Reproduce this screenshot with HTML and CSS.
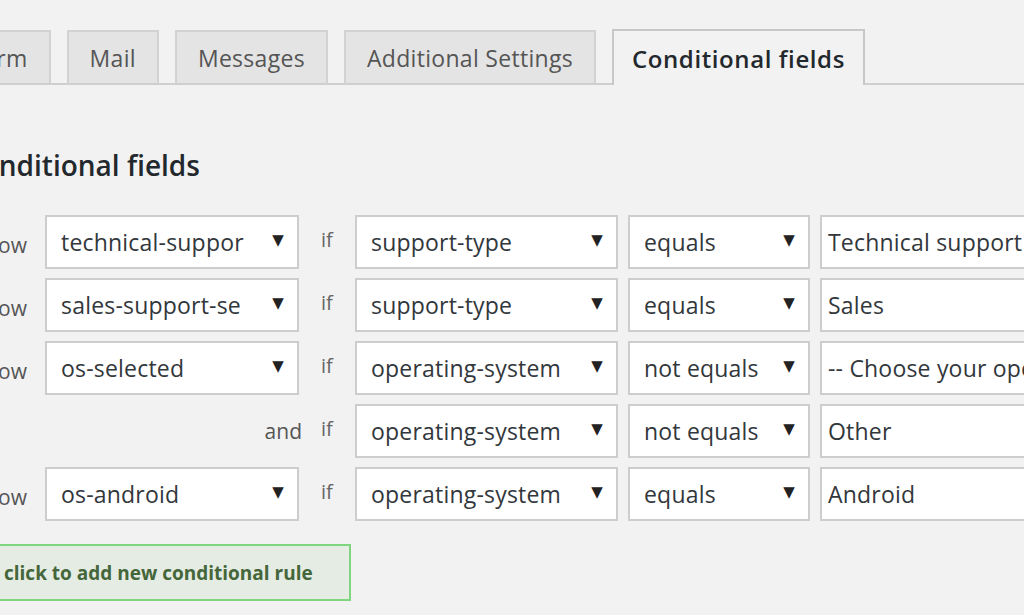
FILE: index.html
```html
<!DOCTYPE html>
<html>
<head>
<meta charset="utf-8">
<link rel="stylesheet" href="styles.css">
</head>
<body>
<div class="page">
  <div class="tabs">
    <div class="tab tab-form">Form</div>
    <div class="tab">Mail</div>
    <div class="tab">Messages</div>
    <div class="tab">Additional Settings</div>
    <div class="tab active">Conditional fields</div>
  </div>
  <div class="content">
    <h2 class="title">Conditional fields</h2>
    <div class="rules">
      <span class="label">Show</span>
      <div class="select"><span>technical-suppor</span><i class="arrow">▼</i></div>
      <span class="if">if</span>
      <div class="select"><span>support-type</span><i class="arrow">▼</i></div>
      <div class="select"><span>equals</span><i class="arrow">▼</i></div>
      <div class="input">Technical support</div>

      <span class="label">Show</span>
      <div class="select"><span>sales-support-se</span><i class="arrow">▼</i></div>
      <span class="if">if</span>
      <div class="select"><span>support-type</span><i class="arrow">▼</i></div>
      <div class="select"><span>equals</span><i class="arrow">▼</i></div>
      <div class="input">Sales</div>

      <span class="label">Show</span>
      <div class="select"><span>os-selected</span><i class="arrow">▼</i></div>
      <span class="if">if</span>
      <div class="select"><span>operating-system</span><i class="arrow">▼</i></div>
      <div class="select"><span>not equals</span><i class="arrow">▼</i></div>
      <div class="input">-- Choose your operating system --</div>

      <span class="and">and</span>
      <span class="if">if</span>
      <div class="select"><span>operating-system</span><i class="arrow">▼</i></div>
      <div class="select"><span>not equals</span><i class="arrow">▼</i></div>
      <div class="input">Other</div>

      <span class="label">Show</span>
      <div class="select"><span>os-android</span><i class="arrow">▼</i></div>
      <span class="if">if</span>
      <div class="select"><span>operating-system</span><i class="arrow">▼</i></div>
      <div class="select"><span>equals</span><i class="arrow">▼</i></div>
      <div class="input">Android</div>
    </div>
    <div class="add-btn">click to add new conditional rule</div>
  </div>
</div>
</body>
</html>
```

FILE: styles.css
```css
html, body {
  margin: 0;
  padding: 0;
  background: #f2f2f2;
  overflow: hidden;
}
body {
  font-family: "Open Sans", "Noto Sans", sans-serif;
  color: #32373c;
  width: 1024px;
  height: 615px;
}
.page {
  padding-top: 30px;
}
.tabs {
  display: flex;
  align-items: flex-end;
  gap: 16px;
  margin-left: -53px;
  border-bottom: 2px solid #cfcfcf;
  height: 53px;
  width: 1100px;
}
.tab {
  height: 53px;
  box-sizing: border-box;
  border: 2px solid #d2d2d2;
  border-bottom: none;
  background: #e4e4e4;
  color: #555;
  font-size: 23px;
  letter-spacing: 0.3px;
  display: flex;
  align-items: center;
  padding: 0 21px;
}
.tab.active {
  height: 56px;
  margin-bottom: -2px;
  background: #f2f2f2;
  color: #23282d;
  font-weight: 600;
  font-size: 24px;
  letter-spacing: 0.6px;
  padding: 0 18px;
  border-color: #c8c8c8;
}
.content {
  margin-left: -32px;
}
.title {
  margin: 62px 0 32px -4px;
  font-size: 28px;
  font-weight: 600;
  color: #23282d;
  line-height: 36px;
}
.rules {
  display: grid;
  grid-template-columns: 67px 254px 36px 263px 182px 240px;
  grid-auto-rows: 54px;
  column-gap: 10px;
  row-gap: 9px;
  align-items: center;
}
.label {
  font-size: 21px;
  color: #555;
  text-align: right;
  padding-right: 8px;
  padding-top: 6px;
}
.and {
  grid-column: 1 / 3;
  text-align: right;
  font-size: 21px;
  color: #555;
  margin-right: -3px;
}
.if {
  font-size: 20px;
  color: #666;
  padding-left: 12px;
  margin-top: -6px;
}
.select, .input {
  height: 54px;
  box-sizing: border-box;
  background: #fff;
  border: 2px solid #cdcdcd;
  display: flex;
  align-items: center;
  font-size: 23px;
  letter-spacing: 0.2px;
  color: #32373c;
  white-space: nowrap;
  overflow: hidden;
}
.select {
  padding: 0 13px 0 14px;
  justify-content: space-between;
}
.select span {
  overflow: hidden;
}
.arrow {
  font-style: normal;
  font-size: 15px;
  color: #222;
  font-family: "DejaVu Sans", sans-serif;
  margin-left: 6px;
  margin-top: -4px;
}
.input {
  padding-left: 6px;
}
.add-btn {
  margin-top: 23px;
  width: 383px;
  height: 57px;
  box-sizing: border-box;
  border: 2px solid #7fd67f;
  background: #e5ece3;
  color: #44663a;
  font-size: 19px;
  font-weight: 700;
  display: flex;
  align-items: center;
  padding-left: 34px;
  white-space: nowrap;
}
```
